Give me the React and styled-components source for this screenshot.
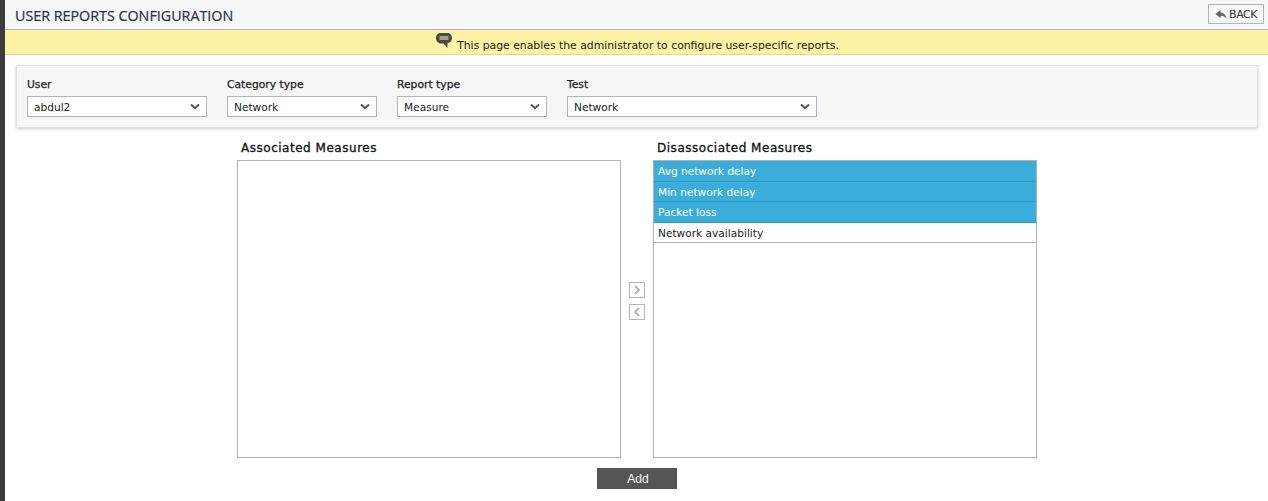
import React from "react";
import styled, { createGlobalStyle } from "styled-components";

const GlobalStyle = createGlobalStyle`
  html, body { margin: 0; padding: 0; background: #fff; }
  body { font-family: "DejaVu Sans", sans-serif; font-size: 11px; color: #222; }
`;

const Page = styled.div`
  height: 501px;
  overflow: hidden;
  border-left: 5px solid #3b3b3b;
  box-sizing: border-box;
`;

const Header = styled.div`
  height: 29px;
  display: flex;
  align-items: center;
  justify-content: space-between;
  padding: 0 4px 0 10px;
  background: #f6f6f6;
  border-bottom: 1px solid #aeb2bd;
`;

const Title = styled.h1`
  margin: 2px 0 0;
  font-family: "Open Sans", sans-serif;
  font-size: 14.3px;
  font-weight: 400;
  color: #2a3140;
  -webkit-text-stroke: 0.2px #2a3140;
`;

const BackButton = styled.button`
  display: flex;
  align-items: center;
  gap: 2px;
  width: 56px;
  height: 20px;
  margin-top: -1px;
  padding: 0 0 0 6px;
  box-sizing: border-box;
  background: #f7f7f7;
  border: 1px solid #aeb4c4;
  font-family: "DejaVu Sans", sans-serif;
  font-size: 11px;
  letter-spacing: -0.4px;
  color: #333;
`;

const Banner = styled.div`
  height: 24px;
  display: flex;
  justify-content: center;
  align-items: flex-start;
  background: #fef2a5;
  border-bottom: 1px solid #e3d88e;
  color: #222;
  padding-left: 2px;
`;

const BannerText = styled.span`
  margin-top: 9px;
  margin-left: 5px;
  font-size: 10.83px;
  line-height: 13px;
`;

const BannerIcon = styled.svg`
  margin-top: 3px;
`;

const FilterPanel = styled.div`
  display: flex;
  gap: 20px;
  height: 63px;
  margin: 10px 10px 0 11px;
  padding: 12px 10px 0;
  box-sizing: border-box;
  background: #f6f6f6;
  border: 1px solid #e2e2e2;
  box-shadow: 0 1px 3px rgba(0, 0, 0, 0.2);
`;

const Field = styled.div`
  display: flex;
  flex-direction: column;
  gap: 4px;
`;

const FieldLabel = styled.label`
  font-size: 10.75px;
  line-height: 14px;
  -webkit-text-stroke: 0.25px #222;
`;

const SelectBox = styled.div`
  width: ${(p) => p.$width}px;
  height: 21px;
  display: flex;
  align-items: center;
  justify-content: space-between;
  padding: 0 6px;
  box-sizing: border-box;
  background: #fff;
  border: 1px solid #aeb4c4;
  font-size: 10.6px;
`;

const Columns = styled.div`
  display: flex;
  justify-content: center;
  align-items: flex-start;
  margin-top: 12px;
  padding-left: 1px;
`;

const Column = styled.div`
  width: 384px;
`;

const ColumnTitle = styled.h2`
  margin: 0 0 3px 4px;
  height: 17px;
  font-size: 12px;
  line-height: 17px;
  font-weight: 400;
  color: #111;
  letter-spacing: 0.52px;
  -webkit-text-stroke: 0.3px #111;
`;

const ListBox = styled.div`
  height: 298px;
  box-sizing: border-box;
  background: #fff;
  border: 1px solid #aeb2bd;
`;

const ListRow = styled.div`
  height: 20.5px;
  line-height: 21px;
  padding-left: 4px;
  box-sizing: border-box;
  overflow: hidden;
  font-size: 10.6px;
  background: ${(p) => (p.$selected ? "#3aaddb" : "#fff")};
  color: ${(p) => (p.$selected ? "#fff" : "#222")};
  border-bottom: 1px solid ${(p) => (p.$selected ? "#2c98cc" : "#aeb2bd")};
`;

const MoveColumn = styled.div`
  width: 32px;
  height: 298px;
  margin-top: 22px;
  display: flex;
  flex-direction: column;
  align-items: center;
  justify-content: center;
  gap: 6px;
  padding-bottom: 21px;
  box-sizing: border-box;
`;

const MoveButton = styled.button`
  width: 16px;
  height: 16px;
  padding: 0;
  display: flex;
  align-items: center;
  justify-content: center;
  background: #fff;
  border: 1px solid #aeb4c4;
`;

const Footer = styled.div`
  display: flex;
  justify-content: center;
  margin-top: 8px;
  padding-left: 1px;
`;

const AddButton = styled.button`
  width: 80px;
  height: 21px;
  padding: 1px 0 0 2px;
  border: 0;
  background: #555;
  color: #fff;
  font-family: "Liberation Sans", sans-serif;
  font-size: 12px;
`;

const Caret = () => (
  <svg width="10" height="7" viewBox="0 0 10 7">
    <path d="M1 1.5 L5 5.2 L9 1.5" fill="none" stroke="#555" strokeWidth="2" />
  </svg>
);

const Select = ({ width, value }) => (
  <SelectBox $width={width}>
    <span>{value}</span>
    <Caret />
  </SelectBox>
);

const filters = [
  { label: "User", value: "abdul2", width: 180 },
  { label: "Category type", value: "Network", width: 150 },
  { label: "Report type", value: "Measure", width: 150 },
  { label: "Test", value: "Network", width: 250 },
];

const measures = [
  { name: "Avg network delay", selected: true },
  { name: "Min network delay", selected: true },
  { name: "Packet loss", selected: true },
  { name: "Network availability", selected: false },
];

export default function App() {
  return (
    <Page>
      <GlobalStyle />
      <Header>
        <Title>USER REPORTS CONFIGURATION</Title>
        <BackButton>
          <svg width="12" height="11" viewBox="0 0 13 11">
            <path d="M6 0.5 L0.5 5 L6 9.5 V6.8 C8.8 6.6 10.8 7.6 12.5 10.5 C12.2 6.4 9.8 3.6 6 3.2 Z" fill="#666" />
          </svg>
          BACK
        </BackButton>
      </Header>
      <Banner>
        <BannerIcon width="16" height="15" viewBox="0 0 16 15">
          <path d="M5 0 H11 C14 0 16 2 16 5 C16 8 14 10 11 10 H11.5 V15 L7.5 10.5 H5 C2 10.5 0 8 0 5 C0 2 2 0 5 0 Z" fill="#4a4a4a" />
          <path d="M3.5 4 H12.5 M3.5 6 H12.5" stroke="#fef2a5" strokeWidth="1" />
        </BannerIcon>
        <BannerText>This page enables the administrator to configure user-specific reports.</BannerText>
      </Banner>
      <FilterPanel>
        {filters.map((f) => (
          <Field key={f.label}>
            <FieldLabel>{f.label}</FieldLabel>
            <Select width={f.width} value={f.value} />
          </Field>
        ))}
      </FilterPanel>
      <Columns>
        <Column>
          <ColumnTitle>Associated Measures</ColumnTitle>
          <ListBox />
        </Column>
        <MoveColumn>
          <MoveButton>
            <svg width="8" height="10" viewBox="0 0 8 10">
              <path d="M2 1 L6 5 L2 9" fill="none" stroke="#aeb4c4" strokeWidth="2" />
            </svg>
          </MoveButton>
          <MoveButton>
            <svg width="8" height="10" viewBox="0 0 8 10">
              <path d="M6 1 L2 5 L6 9" fill="none" stroke="#aeb4c4" strokeWidth="2" />
            </svg>
          </MoveButton>
        </MoveColumn>
        <Column>
          <ColumnTitle>Disassociated Measures</ColumnTitle>
          <ListBox>
            {measures.map((m) => (
              <ListRow key={m.name} $selected={m.selected}>{m.name}</ListRow>
            ))}
          </ListBox>
        </Column>
      </Columns>
      <Footer>
        <AddButton>Add</AddButton>
      </Footer>
    </Page>
  );
}
